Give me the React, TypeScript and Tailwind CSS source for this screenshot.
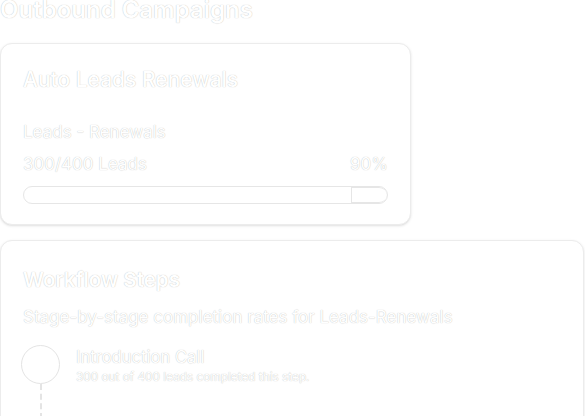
import React from "react";

const ghost = "text-white [text-shadow:0_0_1px_rgba(0,0,0,0.3)]";

export default function App() {
  return (
    <div className="w-[585px] h-[416px] overflow-hidden bg-white font-['Inter','Liberation_Sans',sans-serif]">
      <h1 className={`-mt-[2px] text-2xl leading-none font-semibold ${ghost}`}>
        Outbound Campaigns
      </h1>

      <div className="mt-[21px] w-[411px] rounded-xl border border-[#ececec] shadow-sm bg-white px-[22px] pt-[22px] pb-[20px]">
        <h2 className={`text-[21px] leading-7 font-medium ${ghost}`}>Auto Leads Renewals</h2>
        <p className={`mt-[26px] text-[17px] leading-6 ${ghost}`}>Leads - Renewals</p>
        <div className="mt-2 flex items-center justify-between">
          <span className={`text-[17px] leading-6 ${ghost}`}>300/400 Leads</span>
          <span className={`text-[17px] leading-6 ${ghost}`}>90%</span>
        </div>
        <div className="relative mt-[10px] h-[18px] w-full rounded-full border border-[#e6e6e6] bg-white overflow-hidden">
          <div className="absolute top-0 bottom-0 left-[90%] right-0 border-l border-y border-[#e6e6e6] rounded-r-full" />
        </div>
      </div>

      <div className="mt-[15px] w-[584px] rounded-xl border border-[#ececec] shadow-sm bg-white px-[22px] pt-[25px] pb-6">
        <h2 className={`text-[20.5px] leading-7 font-semibold ${ghost}`}>Workflow Steps</h2>
        <p className={`mt-[11px] text-[17px] leading-6 ${ghost}`}>
          Stage-by-stage completion rates for Leads-Renewals
        </p>
        <div className="mt-4 flex gap-4">
          <div className="-ml-[2px] flex flex-col items-center">
            <div className="h-[39px] w-[39px] rounded-full border border-[#e4e4e4] bg-white" />
            <div className="h-16 w-0 border-l-2 border-dashed border-[#e4e4e4]" />
          </div>
          <div className="flex flex-col">
            <span className={`text-[16.6px] leading-6 ${ghost}`}>Introduction Call</span>
            <span className={`text-[11.8px] leading-4 ${ghost}`}>
              300 out of 400 leads completed this step.
            </span>
          </div>
        </div>
      </div>
    </div>
  );
}
